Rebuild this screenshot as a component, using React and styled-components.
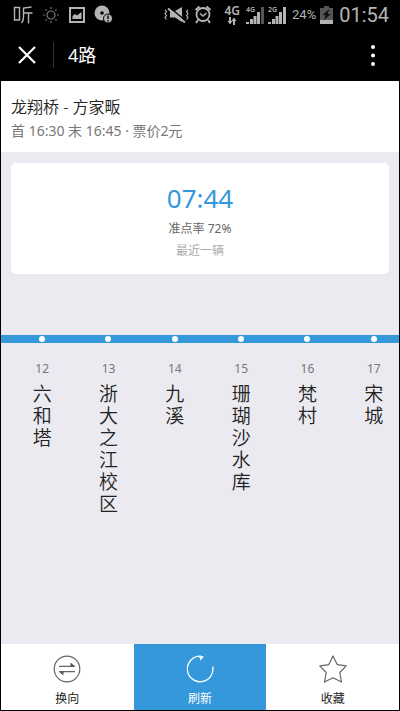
import React from "react";
import styled, { createGlobalStyle } from "styled-components";

const GlobalStyle = createGlobalStyle`
  * {
    box-sizing: border-box;
  }

  body {
    margin: 0;
    background: #000;
    font-family: "Noto Sans", "Noto Sans CJK SC", sans-serif;
  }

  h1, h2, p, ol {
    margin: 0;
    padding: 0;
    font-weight: normal;
  }

  button {
    border: 0;
    padding: 0;
    background: none;
    font-family: inherit;
    cursor: pointer;
  }

  svg {
    display: block;
    flex: none;
  }
`;

const Screen = styled.div`
  min-height: 100vh;
  display: flex;
  flex-direction: column;
  border: 1px solid #000;
  background: #ebeaf0;
`;

const StatusBar = styled.div`
  height: 27px;
  display: flex;
  align-items: center;
  justify-content: space-between;
  padding: 0 10px 0 12px;
  background: #000;
  color: #b4b4b4;
`;

const StatusGroup = styled.div`
  display: flex;
  align-items: center;
  gap: ${(props) => props.$gap}px;
`;

const Battery = styled.span`
  margin-left: 2px;
  font-family: Roboto, sans-serif;
  font-size: 13px;
  line-height: 20px;
`;

const Clock = styled.span`
  font-family: Roboto, sans-serif;
  font-size: 20px;
  line-height: 26px;
  margin-left: 2px;
`;

const Network = styled.div`
  display: flex;
  flex-direction: column;
  align-items: center;
  margin: 0 2px 0 8px;
  font-family: "Noto Sans", sans-serif;
  font-size: 12px;
  font-weight: 600;
  line-height: 12px;
`;

const Signal = styled.div`
  position: relative;
`;

const SignalLabel = styled.span`
  position: absolute;
  top: 0;
  left: 0;
  font-size: 7px;
  font-weight: 600;
  line-height: 8px;
`;

const NavBar = styled.header`
  height: 53px;
  display: flex;
  align-items: center;
  padding: 0 16px;
  background: #000;
  color: #fff;
`;

const NavButton = styled.button`
  display: flex;
  color: #fff;
`;

const Divider = styled.span`
  width: 1px;
  height: 26px;
  margin: 0 14px 0 15px;
  background: #333;
`;

const Title = styled.h1`
  flex: 1;
  font-size: 18px;
  line-height: 26px;
`;

const RouteInfo = styled.section`
  padding: 14px 10px 9px;
  background: #fff;
`;

const RouteName = styled.h2`
  font-size: 16px;
  font-weight: 350;
  line-height: 24px;
  color: #222;
`;

const RouteDetail = styled.p`
  font-size: 14px;
  line-height: 24px;
  color: #777;
`;

const ArrivalCard = styled.section`
  margin: 11px 10px 0;
  padding: 17px 0 12px;
  border-radius: 5px;
  background: #fff;
  text-align: center;
`;

const ArrivalTime = styled.p`
  margin-bottom: 2px;
  font-family: "Noto Sans", sans-serif;
  font-size: 26px;
  line-height: 36px;
  color: #3498db;
`;

const ArrivalNote = styled.p`
  font-size: 12px;
  line-height: 22px;
  color: ${(props) => (props.$muted ? "#aaa" : "#666")};
`;

const Line = styled.main`
  flex: 1;
  margin-top: 61px;
  overflow: hidden;
`;

const Stations = styled.ol`
  display: flex;
  list-style: none;
  background: linear-gradient(#3498db, #3498db) 0 0 / 100% 8px no-repeat;
`;

const Station = styled.li`
  flex: 0 0 calc(100% / 6);
  display: flex;
  flex-direction: column;
  align-items: center;

  &:first-child {
    margin-left: 8px;
  }
`;

const Stop = styled.span`
  width: 6px;
  height: 6px;
  margin: 1px 0 17px;
  border-radius: 50%;
  background: #fff;
`;

const StationNumber = styled.span`
  font-size: 12px;
  line-height: 20px;
  color: #777;
`;

const StationName = styled.span`
  width: 19px;
  margin-top: 3px;
  font-size: 19px;
  font-family: "Noto Sans CJK SC", sans-serif;
  font-weight: 350;
  line-height: 22px;
  word-break: break-all;
  color: #222;
`;

const TabBar = styled.nav`
  display: flex;
  background: #fff;
`;

const TabButton = styled.button`
  flex: 1;
  height: 66px;
  display: flex;
  flex-direction: column;
  align-items: center;
  gap: 6px;
  padding-top: 11px;
  font-size: 12px;
  line-height: 20px;
  background: ${(props) => (props.$active ? "#3498db" : "#fff")};
  color: ${(props) => (props.$active ? "#fff" : "#222")};
`;

const stations = [
  { number: 12, name: "六和塔" },
  { number: 13, name: "浙大之江校区" },
  { number: 14, name: "九溪" },
  { number: 15, name: "珊瑚沙水库" },
  { number: 16, name: "梵村" },
  { number: 17, name: "宋城" },
];

const ListenIcon = () => (
  <svg width="20" height="20" viewBox="0 0 20 20" fill="none" stroke="#b4b4b4" strokeWidth="1.4">
    <path d="M1.500 2.500h5v12.500h-5zM18.500 2l-8 1v9q0 4-2 6M10.500 8h9M15.500 8v10.500" />
  </svg>
);

const SunIcon = () => (
  <svg width="18" height="18" viewBox="0 0 18 18" fill="none" stroke="#777" strokeWidth="1.200">
    <circle cx="9" cy="9" r="4" />
    <path d="M9 1v2M9 15v2M1 9h2M15 9h2M3.400 3.400l1.300 1.300M13.300 13.300l1.300 1.300M3.400 14.600l1.300-1.300M13.300 4.700l1.300-1.300" />
  </svg>
);

const PictureIcon = () => (
  <svg width="16" height="18" viewBox="0 0 16 18">
    <rect x="1" y="2" width="14" height="14" fill="none" stroke="#b4b4b4" strokeWidth="2" />
    <path d="M3.500 13V10l2.500-2 2 1.500 4.500-3.500v7z" fill="#b4b4b4" />
  </svg>
);

const DiscIcon = () => (
  <svg width="19" height="19" viewBox="0 0 19 19">
    <circle cx="8" cy="8" r="7.500" fill="#b4b4b4" />
    <circle cx="8" cy="8" r="1.800" fill="#000" />
    <circle cx="14" cy="13.500" r="4.500" fill="#b4b4b4" stroke="#000" />
    <path d="M14 10.500v3.500M14 15v1.500" stroke="#000" strokeWidth="1.400" />
  </svg>
);

const MuteIcon = () => (
  <svg width="26" height="18" viewBox="0 0 26 18" fill="none" stroke="#b4b4b4">
    <path d="M6 5h5l7-4v15l-7-4.500H6z" fill="#b4b4b4" stroke="none" />
    <path d="M5 1l17 14" stroke="#000" strokeWidth="1.500" />
    <path d="M4 2.500l17 14" strokeWidth="2" />
    <path d="M1 4l1.500 1.500L1 7.500l1.500 2L1 11.500l1.500 2M24 4l-1.500 1.500L24 7.500l-1.500 2 1.500 2-1.500 2" strokeWidth="1.200" />
  </svg>
);

const AlarmIcon = () => (
  <svg width="18" height="19" viewBox="0 0 18 19" fill="none" stroke="#b4b4b4">
    <circle cx="9" cy="9.500" r="6.500" strokeWidth="1.800" />
    <path d="M1.500 5l4-3.500M16.500 5l-4-3.500M4 15l-2 3M14 15l2 3" strokeWidth="2" />
    <path d="M6 8.500l3 2.500 3.500-3" strokeWidth="1.600" />
  </svg>
);

const DataIcon = () => (
  <svg width="10" height="8" viewBox="0 0 10 8" fill="#b4b4b4">
    <path d="M2 0h2v4h1.500L3 7.500.5 4H2zM6 8h2V4h1.500L7 .5 4.500 4H6z" />
  </svg>
);

const SignalIcon = ({ weak }) => (
  <svg width="18" height="18" viewBox="0 0 18 18" fill="#b4b4b4">
    <path d="M0 16h3v2h-3zM4 13h3v5h-3zM7.500 10h3v8h-3zM11 6h3v12h-3z" />
    <path d="M15 1h3v17h-3z" fill={weak ? "#555" : "#b4b4b4"} />
  </svg>
);

const BatteryIcon = () => (
  <svg width="13" height="18" viewBox="0 0 13 18">
    <path d="M4 0h5v2h4v12H0V2h4z" fill="#555" />
    <path d="M0 14h13v4H0z" fill="#b4b4b4" />
    <path d="M9.500 3L2.500 9h3L4 14l7-6H7.500z" fill="#111" />
  </svg>
);

const CloseIcon = () => (
  <svg width="21" height="21" viewBox="0 0 21 21" stroke="#fff" strokeWidth="2.200">
    <path d="M2 3l16 16M18 3L2 19" />
  </svg>
);

const MoreIcon = () => (
  <svg width="24" height="24" viewBox="0 0 24 24" fill="#fff">
    <circle cx="14" cy="4" r="2" />
    <circle cx="14" cy="12.500" r="2" />
    <circle cx="14" cy="21" r="2" />
  </svg>
);

const SwapIcon = () => (
  <svg width="28" height="28" viewBox="0 0 28 28" fill="none" stroke="#666">
    <circle cx="14" cy="14" r="12.800" strokeWidth="1.200" />
    <path d="M6 11.300h16M6 16.700h16" strokeWidth="1.300" />
    <path d="M17.500 7.500l4.500 3.800h-4.500zM10.500 20.500L6 16.700h4.500z" fill="#555" stroke="none" />
  </svg>
);

const RefreshIcon = () => (
  <svg width="28" height="28" viewBox="0 0 28 28" fill="none">
    <path d="M15 1.200A12.800 12.800 0 1 0 26.700 11.500" stroke="#fff" strokeWidth="1.300" />
    <path d="M13 .8l5 .7-3.500 4z" fill="#fff" />
  </svg>
);

const StarIcon = () => (
  <svg width="28" height="28" viewBox="0 0 28 28" fill="none" stroke="#666" strokeWidth="1.200" strokeLinejoin="round">
    <path d="M14 1l4.200 8.600 9 1.300-6.400 6.600 1.700 9.500L14 22.800 5.500 27l1.700-9.500L.8 10.900l9-1.300z" />
  </svg>
);

const App = () => {
  return (
    <>
      <GlobalStyle />
      <Screen>
        <StatusBar>
          <StatusGroup $gap={9}>
            <ListenIcon />
            <SunIcon />
            <PictureIcon />
            <DiscIcon />
          </StatusGroup>
          <StatusGroup $gap={4}>
            <MuteIcon />
            <AlarmIcon />
            <Network>
              4G
              <DataIcon />
            </Network>
            <Signal>
              <SignalLabel>4G</SignalLabel>
              <SignalIcon weak />
            </Signal>
            <Signal>
              <SignalLabel>2G</SignalLabel>
              <SignalIcon />
            </Signal>
            <Battery>24%</Battery>
            <BatteryIcon />
            <Clock>01:54</Clock>
          </StatusGroup>
        </StatusBar>

        <NavBar>
          <NavButton aria-label="关闭">
            <CloseIcon />
          </NavButton>
          <Divider />
          <Title>4路</Title>
          <NavButton aria-label="更多">
            <MoreIcon />
          </NavButton>
        </NavBar>

        <RouteInfo>
          <RouteName>龙翔桥 - 方家畈</RouteName>
          <RouteDetail>首 16:30 末 16:45 · 票价2元</RouteDetail>
        </RouteInfo>

        <ArrivalCard>
          <ArrivalTime>07:44</ArrivalTime>
          <ArrivalNote>准点率 72%</ArrivalNote>
          <ArrivalNote $muted>最近一辆</ArrivalNote>
        </ArrivalCard>

        <Line>
          <Stations>
            {stations.map((station) => (
              <Station key={station.number}>
                <Stop />
                <StationNumber>{station.number}</StationNumber>
                <StationName>{station.name}</StationName>
              </Station>
            ))}
          </Stations>
        </Line>

        <TabBar>
          <TabButton>
            <SwapIcon />
            换向
          </TabButton>
          <TabButton $active>
            <RefreshIcon />
            刷新
          </TabButton>
          <TabButton>
            <StarIcon />
            收藏
          </TabButton>
        </TabBar>
      </Screen>
    </>
  );
};

export default App;
